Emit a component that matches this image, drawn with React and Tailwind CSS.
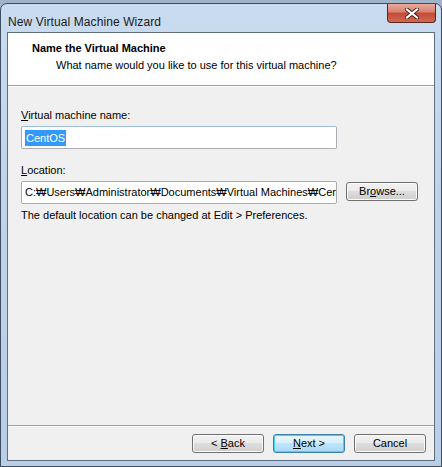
const font = { fontFamily: '"Liberation Sans", Arial, sans-serif' };

function WinButton({ children, focused }) {
  return (
    <button
      className={`w-[72px] h-[19px] rounded-[3px] border text-[11px] text-black leading-none flex items-center justify-center ${
        focused
          ? "border-[#3c7fb1] bg-[linear-gradient(#eaf6fd_0%,#d9f0fc_45%,#bee6fd_50%,#a7d9f5_100%)] shadow-[inset_0_0_0_1px_#48d1f8]"
          : "border-[#707070] bg-[linear-gradient(#f2f2f2_0%,#ebebeb_45%,#dddddd_50%,#cfcfcf_100%)] shadow-[inset_0_0_0_1px_#fcfcfc]"
      }`}
    >
      {children}
    </button>
  );
}

export default function App() {
  return (
    <div className="w-[442px] h-[467px] bg-[#9fb3c9] pt-[3px] overflow-hidden" style={font}>
      <div className="h-[464px] rounded-t-[7px] border border-[#3e4e60] bg-[linear-gradient(180deg,#c9dbef_0%,#bfd3ea_40%,#b9cee7_100%)] flex flex-col px-[6px] pb-[5px]">
        <div className="h-[28px] flex items-start justify-between pl-[1px]">
          <span className="mt-[12px] text-[12px] leading-none text-[#1b1b1b] tracking-[0.1px]">
            New Virtual Machine Wizard
          </span>
          <div className="w-[49px] h-[19px] rounded-b-[4px] border border-t-0 border-[#5b2222] bg-[linear-gradient(#e9a99a_0%,#d8826f_45%,#c4493a_50%,#cf6a4f_100%)] flex items-center justify-center mr-[-1px]">
            <svg width="14" height="11" viewBox="0 0 14 11">
              <path d="M2 1.5 L12 9.5 M12 1.5 L2 9.5" stroke="#4a1a14" strokeWidth="4" strokeLinecap="square" />
              <path d="M2 1.5 L12 9.5 M12 1.5 L2 9.5" stroke="#ffffff" strokeWidth="2.2" strokeLinecap="square" />
            </svg>
          </div>
        </div>
        <div className="flex-1 border border-[#5f6e80] bg-[#f0f0f0] flex flex-col">
          <div className="h-[53px] bg-white border-b border-[#a0a0a0] pl-[24px] pt-[9px]">
            <div className="text-[11px] font-bold text-black leading-[13px]">Name the Virtual Machine</div>
            <div className="text-[11px] text-black leading-[13px] mt-[4px] pl-[24px]">
              What name would you like to use for this virtual machine?
            </div>
          </div>
          <div className="border-t border-white flex-1 flex flex-col pl-[13px] pt-[22px]">
            <div className="text-[11px] leading-[13px] text-black">
              <span className="underline">V</span>irtual machine name:
            </div>
            <div className="mt-[4px] w-[316px] h-[23px] bg-white border border-[#abadb3] border-t-[#9fbddc] rounded-[2px] flex items-center pl-[3px]">
              <span className="bg-[#3399ff] text-white text-[11px] leading-[16px] px-[1px]">CentOS</span>
            </div>
            <div className="mt-[15px] text-[11px] leading-[13px] text-black">
              <span className="underline">L</span>ocation:
            </div>
            <div className="mt-[4px] flex items-start gap-[9px]">
              <div className="w-[316px] h-[23px] bg-white border border-[#abadb3] rounded-[2px] flex items-center pl-[3px] overflow-hidden whitespace-nowrap">
                <span className="text-[11px] text-black">C:₩Users₩Administrator₩Documents₩Virtual Machines₩CentOS</span>
              </div>
              <div className="mt-[1px]">
                <WinButton>
                  Br<span className="underline">o</span>wse...
                </WinButton>
              </div>
            </div>
            <div className="mt-[5px] text-[11px] leading-[13px] text-black">
              The default location can be changed at Edit &gt; Preferences.
            </div>
          </div>
          <div className="border-t border-[#a0a0a0]">
            <div className="border-t border-white h-[34px] flex items-start justify-end gap-[9px] pt-[7px] pr-[8px]">
              <WinButton>
                &lt; <span className="underline ml-[3px]">B</span>ack
              </WinButton>
              <WinButton focused>
                <span className="underline">N</span>ext &gt;
              </WinButton>
              <WinButton>Cancel</WinButton>
            </div>
          </div>
        </div>
      </div>
    </div>
  );
}
